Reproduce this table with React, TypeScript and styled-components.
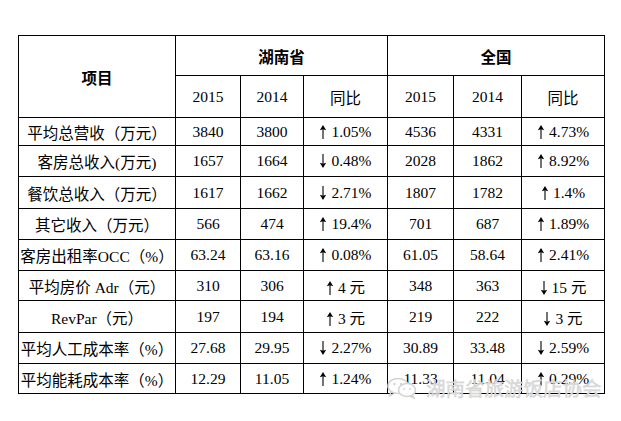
import React from 'react'
import styled, { createGlobalStyle } from 'styled-components'

type Trend = { dir: 'up' | 'down'; text: string }
type Row = {
  label: string
  h: number
  values: [string, string, Trend, string, string, Trend]
}

const up = (text: string): Trend => ({ dir: 'up', text })
const down = (text: string): Trend => ({ dir: 'down', text })

const rows: Row[] = [
  { label: '平均总营收（万元）', h: 28, values: ['3840', '3800', up('1.05%'), '4536', '4331', up('4.73%')] },
  { label: '客房总收入(万元)', h: 31, values: ['1657', '1664', down('0.48%'), '2028', '1862', up('8.92%')] },
  { label: '餐饮总收入（万元）', h: 32, values: ['1617', '1662', down('2.71%'), '1807', '1782', up('1.4%')] },
  { label: '其它收入（万元）', h: 31, values: ['566', '474', up('19.4%'), '701', '687', up('1.89%')] },
  { label: '客房出租率OCC（%）', h: 31, values: ['63.24', '63.16', up('0.08%'), '61.05', '58.64', up('2.41%')] },
  { label: '平均房价 Adr（元）', h: 30, values: ['310', '306', up('4 元'), '348', '363', down('15 元')] },
  { label: 'RevPar（元）', h: 32, values: ['197', '194', up('3 元'), '219', '222', down('3 元')] },
  { label: '平均人工成本率（%）', h: 31, values: ['27.68', '29.95', down('2.27%'), '30.89', '33.48', down('2.59%')] },
  { label: '平均能耗成本率（%）', h: 30, values: ['12.29', '11.05', up('1.24%'), '11.33', '11.04', up('0.29%')] },
]

const colWidths = [157, 65, 63, 84, 66, 68, 83]

const GlobalStyle = createGlobalStyle`
  html, body {
    margin: 0;
    padding: 0;
    background: #fff;
  }
  body {
    font-family: "Liberation Serif", "Noto Sans CJK SC", serif;
    color: #000;
  }
`

const Arrow = ({ dir }: { dir: 'up' | 'down' }) => (
  <S.ArrowSvg viewBox="0 0 8 14" width={8} height={14}>
    {dir === 'up' ? (
      <>
        <line x1="4" y1="4" x2="4" y2="14" stroke="#000" strokeWidth="1.1" />
        <polygon points="0.8,5.2 4,0 7.2,5.2 4,4.2" fill="#000" />
      </>
    ) : (
      <>
        <line x1="4" y1="0" x2="4" y2="10" stroke="#000" strokeWidth="1.1" />
        <polygon points="0.8,8.8 4,14 7.2,8.8 4,9.8" fill="#000" />
      </>
    )}
  </S.ArrowSvg>
)

const WeChatMark = () => (
  <svg width="30" height="22" viewBox="0 0 30 22">
    <ellipse cx="11" cy="9" rx="10" ry="7.5" fill="none" stroke="#d4d4d4" strokeWidth="1.6" />
    <path d="M4 14.5 L2.5 19 L8 16" fill="none" stroke="#d4d4d4" strokeWidth="1.4" />
    <ellipse cx="20" cy="13" rx="8.5" ry="6.5" fill="#fff" stroke="#d4d4d4" strokeWidth="1.6" />
    <path d="M25 18 L27 21 L22 19" fill="none" stroke="#d4d4d4" strokeWidth="1.4" />
    <circle cx="7.5" cy="7" r="1.2" fill="#d4d4d4" />
    <circle cx="14" cy="7" r="1.2" fill="#d4d4d4" />
    <circle cx="17" cy="12" r="1" fill="#d4d4d4" />
    <circle cx="23" cy="12" r="1" fill="#d4d4d4" />
  </svg>
)

const TrendCell = ({ trend }: { trend: Trend }) => (
  <S.Cell>
    <Arrow dir={trend.dir} />
    {trend.text}
  </S.Cell>
)

export default function App() {
  return (
    <S.Page>
      <GlobalStyle />
      <S.Table>
        <colgroup>
          {colWidths.map((w, i) => (
            <col key={i} style={{ width: w }} />
          ))}
        </colgroup>
        <thead>
          <S.Row h={40}>
            <S.HeadCell rowSpan={2}>项目</S.HeadCell>
            <S.HeadCell colSpan={3}>湖南省</S.HeadCell>
            <S.HeadCell colSpan={3}>全国</S.HeadCell>
          </S.Row>
          <S.Row h={42}>
            <S.Cell>2015</S.Cell>
            <S.Cell>2014</S.Cell>
            <S.Cell>同比</S.Cell>
            <S.Cell>2015</S.Cell>
            <S.Cell>2014</S.Cell>
            <S.Cell>同比</S.Cell>
          </S.Row>
        </thead>
        <tbody>
          {rows.map(r => (
            <S.Row key={r.label} h={r.h}>
              <S.Cell>{r.label}</S.Cell>
              <S.Cell>{r.values[0]}</S.Cell>
              <S.Cell>{r.values[1]}</S.Cell>
              <TrendCell trend={r.values[2]} />
              <S.Cell>{r.values[3]}</S.Cell>
              <S.Cell>{r.values[4]}</S.Cell>
              <TrendCell trend={r.values[5]} />
            </S.Row>
          ))}
        </tbody>
      </S.Table>
      <S.Watermark>
        <WeChatMark />
        <S.WatermarkText>湖南省旅游饭店协会</S.WatermarkText>
      </S.Watermark>
    </S.Page>
  )
}

const S = {
  Page: styled.div`
    position: relative;
    width: 621px;
    height: 421px;
    padding: 35px 0 0 18px;
    box-sizing: border-box;
    overflow: hidden;
  `,
  Table: styled.table`
    border-collapse: collapse;
    table-layout: fixed;
    width: 586px;
    font-size: 15.5px;
  `,
  Row: styled.tr<{ h: number }>`
    height: ${props => props.h}px;
  `,
  HeadCell: styled.th`
    border: 1px solid #000;
    padding: 0;
    text-align: center;
    vertical-align: middle;
    font-family: "Noto Sans CJK SC", sans-serif;
    font-weight: 700;
    font-size: 15.5px;
  `,
  Cell: styled.td`
    border: 1px solid #000;
    padding: 0;
    text-align: center;
    vertical-align: middle;
    white-space: nowrap;
    font-weight: 400;
  `,
  ArrowSvg: styled.svg`
    display: inline-block;
    vertical-align: -2px;
    margin-right: 4px;
  `,
  Watermark: styled.div`
    position: absolute;
    left: 387px;
    top: 377px;
    display: flex;
    align-items: center;
    gap: 9px;
  `,
  WatermarkText: styled.span`
    font-family: "Noto Sans CJK SC", sans-serif;
    font-size: 19.5px;
    line-height: 22px;
    color: #dcdcdc;
    letter-spacing: 0;
    -webkit-text-stroke: 0.4px #cfcfcf;
  `,
}
